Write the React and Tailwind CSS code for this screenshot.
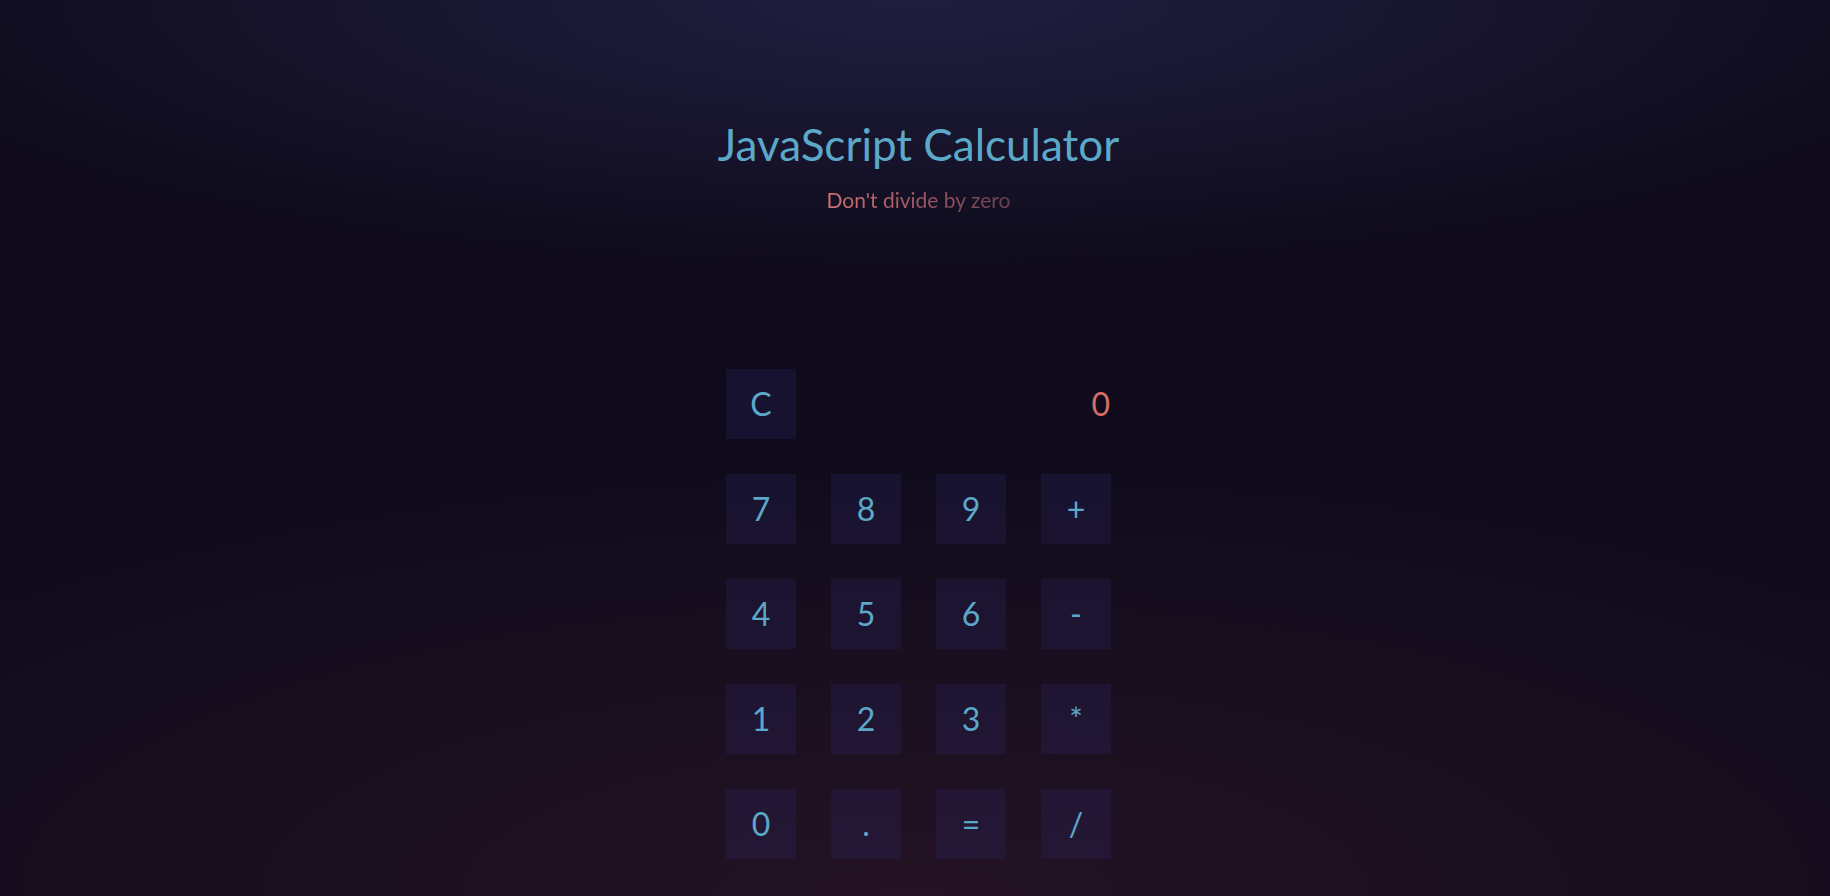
const keys = ["7", "8", "9", "+", "4", "5", "6", "-", "1", "2", "3", "*", "0", ".", "=", "/"];

const Key = ({ label }) => (
  <button className="flex h-[70px] w-[70px] items-center justify-center bg-[#2a2660]/30 text-[32px] leading-none text-[#5ba8c8]">
    {label}
  </button>
);

const App = () => {
  return (
    <div className="min-h-screen w-full bg-[#0f0b1b] bg-[radial-gradient(ellipse_60%_30%_at_50%_0%,#201e40_0%,rgba(15,11,27,0)_100%)] font-['Lato',sans-serif]">
      <div className="min-h-screen w-full bg-[radial-gradient(ellipse_75%_50%_at_50%_100%,#241324_0%,rgba(15,11,27,0)_100%)] pl-[7px]">
        <header className="pt-[116px] text-center">
          <h1 className="text-[44px] leading-[56px] text-[#5ba8c8]">JavaScript Calculator</h1>
          <p className="mt-[14px] inline-block bg-gradient-to-r from-[#d27370] to-[#6a3f52] bg-clip-text text-[21px] leading-[28px] text-transparent">
            Don't divide by zero
          </p>
        </header>

        <main className="mt-[155px] flex justify-center pb-[37px]">
          <div className="grid w-[385px] grid-cols-4 gap-[35px]">
            <Key label="C" />
            <div className="col-span-3 flex items-center justify-end pr-[1px] text-[32px] leading-none text-[#d66e68]">
              0
            </div>
            {keys.map((k) => (
              <Key key={k} label={k} />
            ))}
          </div>
        </main>
      </div>
    </div>
  );
};

export default App;
